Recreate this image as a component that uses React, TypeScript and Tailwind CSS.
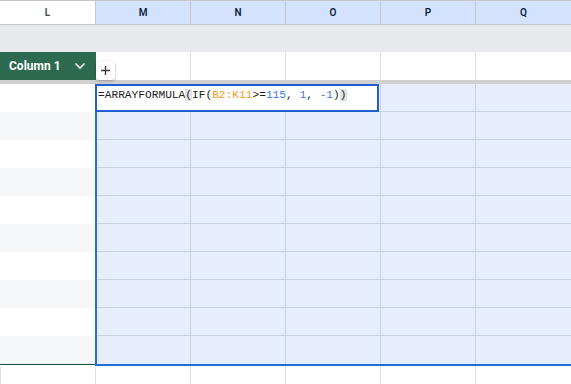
import React from "react";

const sans = { fontFamily: "Roboto, 'Liberation Sans', Arial, sans-serif" };
const mono = { fontFamily: "'Liberation Mono', 'DejaVu Sans Mono', monospace" };

export default function App() {
  const rows = Array.from({ length: 10 }, (_, i) => i);
  return (
    <div className="relative w-[571px] h-[384px] overflow-hidden bg-white" style={sans}>
      {/* column headers */}
      <div className="flex h-[25px] border-t border-b border-[#c4c7c5]">
        <div className="w-[96px] border-r border-[#c4c7c5] bg-white flex items-center justify-center text-[10px] font-semibold text-[#444746]">L</div>
        {["M", "N", "O", "P"].map((c) => (
          <div key={c} className="w-[95px] border-r border-[#c4c7c5] bg-[#d3e3fd] flex items-center justify-center text-[10px] font-semibold text-[#0b1f44]">{c}</div>
        ))}
        <div className="flex-1 bg-[#d3e3fd] flex items-center justify-center text-[10px] font-semibold text-[#0b1f44]">Q</div>
      </div>
      {/* gray band */}
      <div className="h-[27px] bg-[#e8e9ec]" />
      {/* table header row */}
      <div className="flex h-[28px]">
        <div className="w-[96px] bg-[#2e6a4f] flex items-center justify-between pl-[9px] pr-[10px]">
          <span className="text-white text-[12px] font-bold">Column 1</span>
          <svg width="12" height="8" viewBox="0 0 12 8">
            <polyline points="1.5,1.5 6,6 10.5,1.5" fill="none" stroke="white" strokeWidth="1.6" />
          </svg>
        </div>
        {[0, 1, 2, 3].map((i) => (
          <div key={i} className="w-[95px] border-r border-[#e1e1e1]" />
        ))}
        <div className="flex-1" />
      </div>
      {/* frozen divider */}
      <div className="h-[4px] bg-[#d0d0d0]" />
      {/* data area */}
      <div className="flex h-[282px]">
        <div className="w-[95px] flex flex-col">
          {rows.map((i) => (
            <div key={i} className={`h-[28px] ${i % 2 === 1 ? "bg-[#f5f7f9]" : "bg-white"}`} />
          ))}
          <div className="h-px bg-[#1e4d3a]" />
          <div className="flex-1 bg-white" />
        </div>
        <div className="flex-1 flex flex-col border-l-2 border-b-2 border-[#1f6fd6] bg-[#e6eefd]">
          {rows.map((i) => (
            <div key={i} className={`flex h-[28px] ${i < 9 ? "border-b border-[#c8d2e2]" : ""}`}>
              <div className="w-[94px] border-r border-[#c8d2e2]" />
              <div className="w-[95px] border-r border-[#c8d2e2]" />
              <div className="w-[95px] border-r border-[#c8d2e2]" />
              <div className="w-[95px] border-r border-[#c8d2e2]" />
              <div className="flex-1" />
            </div>
          ))}
        </div>
      </div>
      {/* below */}
      <div className="flex h-[18px]">
        <div className="w-[96px] border-l border-r border-[#e1e1e1]" />
        {[0, 1, 2, 3].map((i) => (
          <div key={i} className="w-[95px] border-r border-[#e1e1e1]" />
        ))}
        <div className="flex-1" />
      </div>

      {/* add column button */}
      <div className="absolute left-[96px] top-[61px] w-[19px] h-[19px] rounded-[4px] bg-white shadow-[0_1px_3px_rgba(0,0,0,0.3)] flex items-center justify-center">
        <svg width="11" height="11" viewBox="0 0 11 11">
          <path d="M5.5 1v9M1 5.5h9" stroke="#3c4043" strokeWidth="1.4" fill="none" />
        </svg>
      </div>

      {/* formula editor */}
      <div className="absolute left-[95px] top-[84px] w-[284px] h-[28px] border-2 border-[#1f5fcf] bg-white pl-[1px] pt-[1px]">
        <div className="text-[11.2px] leading-[16px] text-[#202124] whitespace-nowrap" style={mono}>
          <span>=ARRAYFORMULA</span>
          <span className="bg-[#e3e3e3]">(</span>
          <span>IF(</span>
          <span className="text-[#f29b1d]">B2:K11</span>
          <span>&gt;=</span>
          <span className="text-[#3b78e7]">115</span>
          <span>, </span>
          <span className="text-[#3b78e7]">1</span>
          <span>, </span>
          <span className="text-[#3b78e7]">-1</span>
          <span>)</span>
          <span className="bg-[#e3e3e3]">)</span>
        </div>
      </div>
    </div>
  );
}
